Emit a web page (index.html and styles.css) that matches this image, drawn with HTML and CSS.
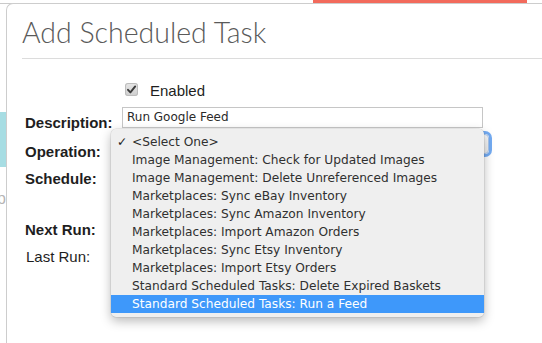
FILE: index.html
```html
<!DOCTYPE html>
<html>
<head>
<meta charset="utf-8">
<link rel="stylesheet" href="styles.css">
</head>
<body>
<div class="backdrop">
  <div class="topbar"><div class="redbar"></div></div>
  <div class="teal"></div>
  <div class="ghost">p</div>
</div>
<div class="modal">
  <h1 class="title">Add Scheduled Task</h1>
  <div class="form">
    <div class="row-enabled">
      <span class="checkbox"><svg width="13" height="13" viewBox="0 0 13 13"><path d="M3 6.8 L5.4 9.4 L10.2 3.4" fill="none" stroke="#3a3a3a" stroke-width="1.9" stroke-linecap="round" stroke-linejoin="round"/></svg></span>
      <span class="enabled-text">Enabled</span>
    </div>
    <div class="row r-desc"><span class="lbl">Description:</span><div class="input">Run Google Feed</div></div>
    <div class="row r-op"><span class="lbl">Operation:</span><div class="select"></div></div>
    <div class="row r-sched"><span class="lbl">Schedule:</span></div>
    <div class="row r-next"><span class="lbl">Next Run:</span></div>
    <div class="row r-last"><span class="lbl normal">Last Run:</span></div>
  </div>
  <ul class="popup">
    <li class="opt"><span class="check">✓</span>&lt;Select One&gt;</li>
    <li class="opt">Image Management: Check for Updated Images</li>
    <li class="opt">Image Management: Delete Unreferenced Images</li>
    <li class="opt">Marketplaces: Sync eBay Inventory</li>
    <li class="opt">Marketplaces: Sync Amazon Inventory</li>
    <li class="opt">Marketplaces: Import Amazon Orders</li>
    <li class="opt">Marketplaces: Sync Etsy Inventory</li>
    <li class="opt">Marketplaces: Import Etsy Orders</li>
    <li class="opt">Standard Scheduled Tasks: Delete Expired Baskets</li>
    <li class="opt selected">Standard Scheduled Tasks: Run a Feed</li>
  </ul>
</div>
</body>
</html>
```
FILE: styles.css
```css
html, body {
  margin: 0;
  padding: 0;
  background: #fff;
  width: 542px;
  height: 343px;
  overflow: hidden;
  position: relative;
  font-family: "Liberation Sans", Arial, sans-serif;
}
.backdrop {
  display: flex;
  flex-direction: column;
}
.topbar {
  height: 3px;
  border-bottom: 1px solid #cacaca;
}
.redbar {
  margin-left: 313px;
  width: 214px;
  height: 3px;
  background: #f26a5c;
}
.teal {
  margin-top: 108px;
  width: 6px;
  height: 55px;
  background: #a7dde3;
}
.ghost {
  margin-top: 22px;
  width: 6px;
  overflow: hidden;
  font-size: 16px;
  line-height: 20px;
  color: #b5b5b5;
  direction: rtl;
}
.modal {
  position: absolute;
  left: 6px;
  top: 3px;
  right: 0;
  bottom: 0;
  background: #fff;
  border: 1px solid #cdcdcd;
  border-right: none;
  border-bottom: none;
  border-radius: 7px 0 0 0;
}
.title {
  margin: 0 0 0 15px;
  padding: 11px 0 9px 0;
  border-bottom: 1px solid #dcdcdc;
  font-family: Lato, "Open Sans", sans-serif;
  font-weight: 300;
  font-size: 28.5px;
  line-height: 34px;
  color: #5a5a5a;
}
.form {
  padding: 22px 0 0 18px;
  display: flex;
  flex-direction: column;
  color: #1e1e1e;
  font-size: 15px;
}
.row-enabled {
  display: flex;
  align-items: center;
  height: 20px;
  margin-left: 100px;
}
.checkbox {
  width: 13px;
  height: 13px;
  margin-top: -3px;
  border-radius: 3px;
  background: linear-gradient(#e6e6e6, #cfcfcf);
  box-shadow: inset 0 0 0 1px #bdbdbd;
  display: flex;
}
.enabled-text {
  margin-left: 12px;
  line-height: 20px;
}
.row {
  display: flex;
  align-items: flex-start;
}
.lbl {
  width: 97px;
  flex: none;
  line-height: 20px;
  font-weight: bold;
}
.lbl.normal {
  font-weight: normal;
  margin-left: 1px;
  width: 96px;
}
.r-desc { margin-top: 12px; height: 29px; }
.r-op { height: 27px; }
.r-sched { height: 51px; }
.r-next { height: 27px; }
.r-last { height: 20px; }
.input {
  margin-top: -6px;
  box-sizing: border-box;
  width: 361px;
  height: 21px;
  border: 1px solid #c6c6c6;
  padding-left: 4px;
  font-family: "DejaVu Sans", sans-serif;
  font-size: 12px;
  line-height: 19px;
  color: #2a2a2a;
  font-weight: normal;
}
.select {
  margin-top: -8px;
  box-sizing: border-box;
  width: 367px;
  height: 20px;
  border: 1px solid #a9c6ee;
  border-radius: 4px;
  background: linear-gradient(#fafafa, #ececec);
  box-shadow: 0 0 0 3px #74acf3;
}
.popup {
  position: absolute;
  left: 104px;
  top: 125px;
  width: 373px;
  margin: 0;
  padding: 4px 0;
  list-style: none;
  background: #efefef;
  border-radius: 5px;
  box-shadow: 0 0 0 0.5px rgba(0,0,0,0.12), 0 4px 11px rgba(0,0,0,0.28);
}
.opt {
  position: relative;
  height: 18px;
  line-height: 18px;
  padding-left: 21px;
  font-family: "DejaVu Sans", sans-serif;
  font-size: 12.2px;
  color: #303030;
  white-space: nowrap;
}
.opt.selected {
  background: #3e98fa;
  color: #fff;
}
.check {
  position: absolute;
  left: 6px;
  top: 0;
  color: #222;
  font-weight: bold;
}
```
